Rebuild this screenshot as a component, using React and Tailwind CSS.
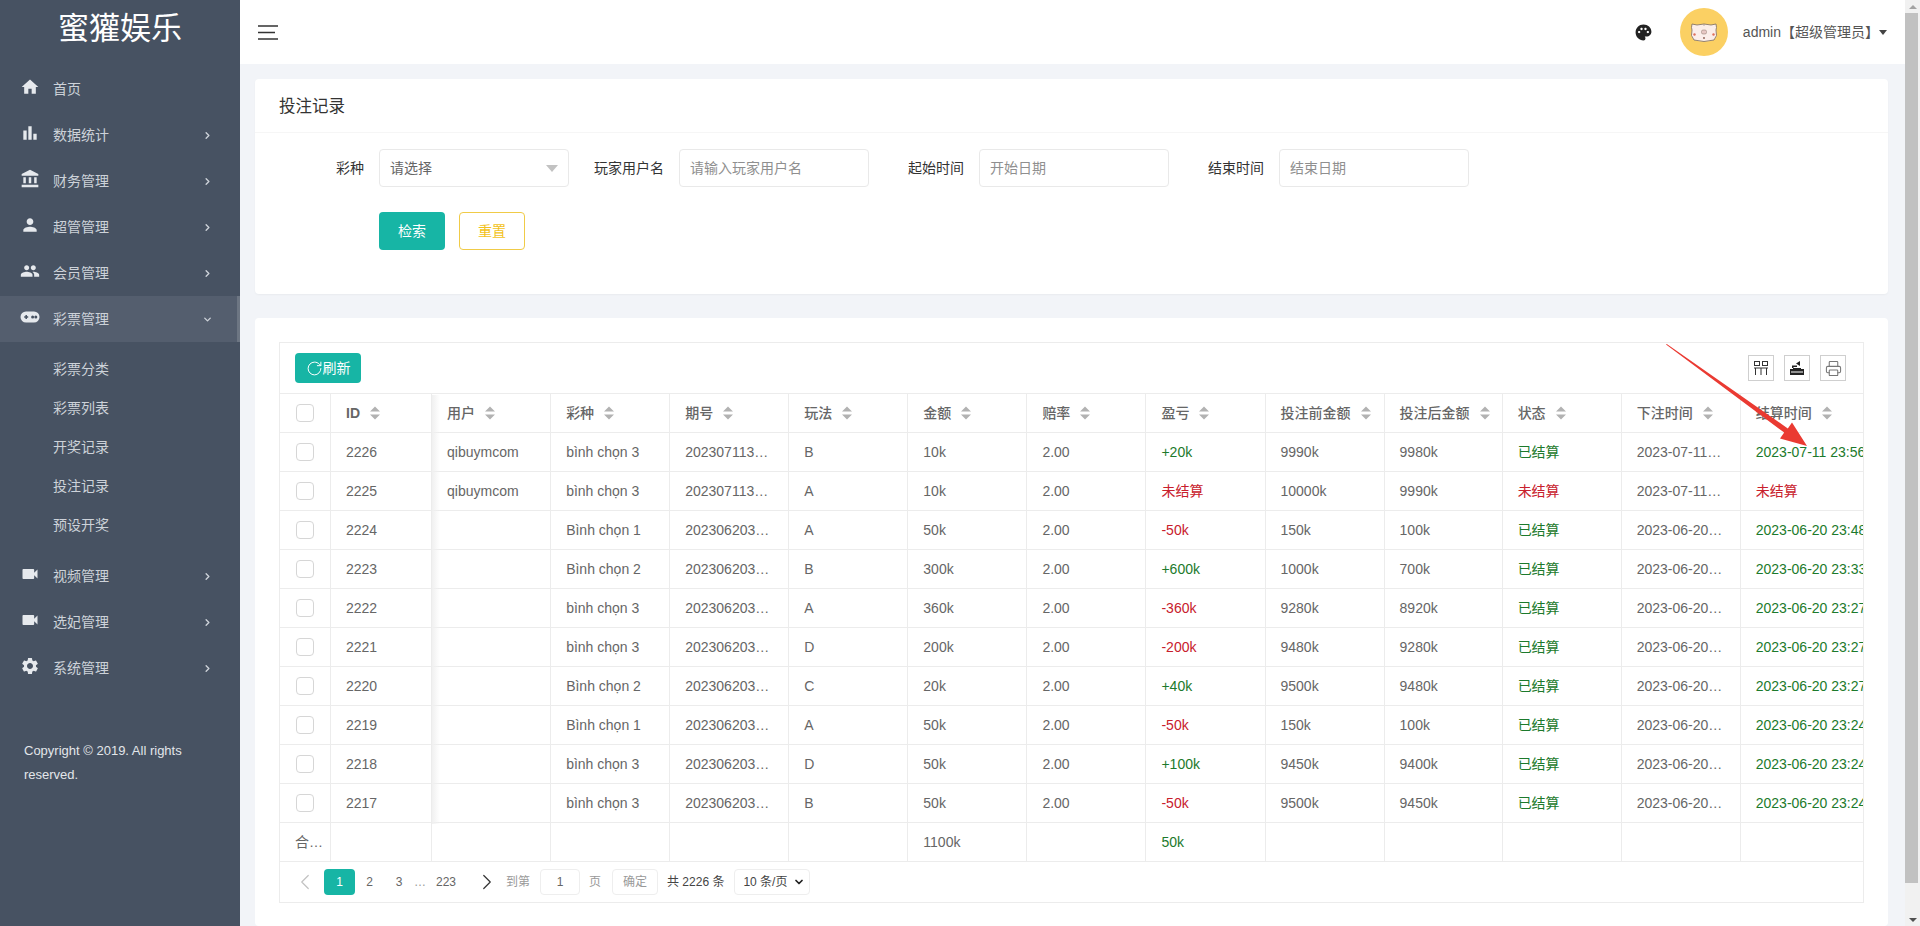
import React from 'react';
import { ChevronRight, ChevronDown, ChevronLeft, Printer, RotateCw } from 'lucide-react';
import {
	MdHome,
	MdBarChart,
	MdAccountBalance,
	MdPerson,
	MdPeople,
	MdVideocam,
	MdSettings,
	MdPalette,
} from 'react-icons/md';

const GamepadIcon = ({ className }) => (
	<svg width="20" height="20" viewBox="0 0 20 20" className={className}>
		<rect x="0.5" y="4.5" width="19" height="11" rx="5.5" fill="currentColor" />
		<path d="M4.2 10h4M6.2 8v4" stroke="#475262" strokeWidth="1.5" />
		<circle cx="12.6" cy="10" r="1.5" fill="#475262" />
		<circle cx="15.8" cy="10" r="1.5" fill="#475262" />
	</svg>
);

const menuTop = [
	{ label: '首页', icon: MdHome, noArrow: true },
	{ label: '数据统计', icon: MdBarChart },
	{ label: '财务管理', icon: MdAccountBalance },
	{ label: '超管管理', icon: MdPerson },
	{ label: '会员管理', icon: MdPeople },
];
const menuBottom = [
	{ label: '视频管理', icon: MdVideocam },
	{ label: '选妃管理', icon: MdVideocam },
	{ label: '系统管理', icon: MdSettings },
];
const subMenu = ['彩票分类', '彩票列表', '开奖记录', '投注记录', '预设开奖'];
const columns = ['用户', '彩种', '期号', '玩法', '金额', '赔率', '盈亏', '投注前金额', '投注后金额', '状态', '下注时间', '结算时间'];

const rows = [
	['2226', 'qibuymcom', 'bình chọn 3', '20230711355012', 'B', '10k', '+20k', '9990k', '9980k', '2023-07-11 23:55:02', '2023-07-11 23:56:03'],
	['2225', 'qibuymcom', 'bình chọn 3', '20230711355013', 'A', '10k', '未结算', '10000k', '9990k', '2023-07-11 23:55:40', ''],
	['2224', '', 'Bình chọn 1', '20230620347001', 'A', '50k', '-50k', '150k', '100k', '2023-06-20 23:47:10', '2023-06-20 23:48:03'],
	['2223', '', 'Bình chọn 2', '20230620332001', 'B', '300k', '+600k', '1000k', '700k', '2023-06-20 23:32:10', '2023-06-20 23:33:03'],
	['2222', '', 'bình chọn 3', '20230620326001', 'A', '360k', '-360k', '9280k', '8920k', '2023-06-20 23:26:30', '2023-06-20 23:27:03'],
	['2221', '', 'bình chọn 3', '20230620326002', 'D', '200k', '-200k', '9480k', '9280k', '2023-06-20 23:26:20', '2023-06-20 23:27:03'],
	['2220', '', 'Bình chọn 2', '20230620326003', 'C', '20k', '+40k', '9500k', '9480k', '2023-06-20 23:26:10', '2023-06-20 23:27:03'],
	['2219', '', 'Bình chọn 1', '20230620323001', 'A', '50k', '-50k', '150k', '100k', '2023-06-20 23:23:30', '2023-06-20 23:24:03'],
	['2218', '', 'bình chọn 3', '20230620323002', 'D', '50k', '+100k', '9450k', '9400k', '2023-06-20 23:23:20', '2023-06-20 23:24:03'],
	['2217', '', 'bình chọn 3', '20230620323003', 'B', '50k', '-50k', '9500k', '9450k', '2023-06-20 23:23:10', '2023-06-20 23:24:03'],
];

const green = 'text-[#1c7a2c]';
const red = 'text-[#c8202c]';

const MenuItem = ({ item, active }) => {
	const Icon = item.icon;
	return (
		<div className={`flex h-[46px] items-center pl-5 ${active ? 'border-r-[3px] border-[#6d7683] bg-[#545e6e] pr-6' : 'pr-[27px]'}`}>
			<Icon className="mb-[5px] w-5 shrink-0 text-[#e6e9ed]" size={20} />
			<span className="ml-[13px] flex-1">{item.label}</span>
			{active ? (
				<ChevronDown size={11} strokeWidth={3} />
			) : (
				!item.noArrow && <ChevronRight size={11} strokeWidth={3} />
			)}
		</div>
	);
};

const Sidebar = () => (
	<aside className="h-full w-[240px] shrink-0 bg-[#475262] text-[14px] text-[#cdd2d9]">
		<div className="mb-2 flex h-[58px] items-center justify-center text-[31px] text-white">蜜獾娱乐</div>
		{menuTop.map((item) => (
			<MenuItem key={item.label} item={item} />
		))}
		<MenuItem item={{ label: '彩票管理', icon: GamepadIcon }} active />
		<div className="pb-2 pl-[53px] pt-2">
			{subMenu.map((label) => (
				<div key={label} className="flex h-[39px] items-center">
					{label}
				</div>
			))}
		</div>
		{menuBottom.map((item) => (
			<MenuItem key={item.label} item={item} />
		))}
		<p className="mt-[48px] w-[192px] pl-6 text-[13px] leading-6 text-[#e3e6ea]">Copyright © 2019. All rights reserved.</p>
	</aside>
);

const Pig = () => (
	<svg width="30" height="24" viewBox="0 0 30 24">
		<path d="M3 4 L8 5 Q15 3 22 5 L27 4 Q28 8 27 10 Q29 16 25 20 Q15 23 5 20 Q1 16 3 10 Q2 8 3 4Z" fill="#fbeeea" stroke="#7a6a5c" strokeWidth="0.8" />
		<rect x="12.5" y="10" width="5" height="4" rx="1.5" fill="#e8c8c4" stroke="#8a7468" strokeWidth="0.5" />
		<circle cx="5.5" cy="14.5" r="1.2" fill="#e0705c" />
		<circle cx="24.5" cy="14.5" r="1.2" fill="#e0705c" />
		<circle cx="15" cy="18" r="0.9" fill="#8a5c50" />
		<circle cx="15" cy="5" r="0.6" fill="#8a7468" />
	</svg>
);

const Header = () => (
	<header className="flex h-16 shrink-0 items-center bg-white pl-[18px] pr-[18px] text-[14px] text-[#555]">
		<svg width="20" height="15" viewBox="0 0 20 15" className="shrink-0">
			<path d="M0 1h20M0 7.5h17M0 14h20" stroke="#333" strokeWidth="1.5" />
		</svg>
		<div className="flex-1" />
		<MdPalette size={19} className="text-[#222]" />
		<div className="ml-[27px] flex h-12 w-12 items-center justify-center rounded-full bg-[#fbd063]">
			<Pig />
		</div>
		<span className="ml-[15px]">admin【超级管理员】</span>
		<span className="h-0 w-0 border-x-4 border-t-[5px] border-x-transparent border-t-[#444]" />
	</header>
);

const fieldClass = 'h-[38px] w-[190px] rounded-sm border border-[#e9e9e9] px-[10px] text-[14px] text-[#666] outline-none placeholder:text-[#8f8f8f]';

const Field = ({ label, children }) => (
	<div className="flex w-[300px] items-center">
		<label className="w-[109px] pr-[15px] text-right text-[14px] text-[#333]">{label}</label>
		{children}
	</div>
);

const SearchCard = () => (
	<section className="rounded-sm bg-white shadow-[0_1px_2px_rgba(0,0,0,0.04)]">
		<h2 className="flex h-[54px] items-center border-b border-[#f6f6f6] pl-6 pt-[2px] text-[16.5px] font-normal text-[#333]">投注记录</h2>
		<div className="pb-[44px] pt-4">
			<div className="flex pl-[15px]">
				<Field label="彩种">
					<div className={`${fieldClass} flex items-center justify-between text-[#8f8f8f]`}>
						<span>请选择</span>
						<span className="h-0 w-0 border-x-[6px] border-t-[7px] border-x-transparent border-t-[#c2c2c2]" />
					</div>
				</Field>
				<Field label="玩家用户名">
					<input className={fieldClass} placeholder="请输入玩家用户名" />
				</Field>
				<Field label="起始时间">
					<input className={fieldClass} placeholder="开始日期" />
				</Field>
				<Field label="结束时间">
					<input className={fieldClass} placeholder="结束日期" />
				</Field>
			</div>
			<div className="mt-[25px] flex gap-[14px] pl-[124px] text-[14px]">
				<button className="h-[38px] w-[66px] rounded-sm bg-[#17b5a5] text-white">检索</button>
				<button className="h-[38px] w-[66px] rounded-sm border border-[#f0cb47] bg-white text-[#f2c21a]">重置</button>
			</div>
		</div>
	</section>
);

const SortIcon = () => (
	<svg width="10" height="14" viewBox="0 0 10 14" className="ml-[10px] shrink-0">
		<path d="M5 0.5 L10 5.5 H0Z M5 13.5 L0 8.5 H10Z" fill="#b2b2b2" />
	</svg>
);

const CheckBox = () => <div className="mx-auto h-[18px] w-[18px] rounded-sm border border-[#d6d6d6] bg-white" />;

const tdClass = 'h-[39px] border-b border-r border-[#ececec] p-0 text-[14px] font-normal';

const Cell = ({ children, className = '' }) => (
	<td className={tdClass}>
		<div className={`truncate px-[15px] ${className}`}>{children}</div>
	</td>
);

const profitColor = (v) => (v.startsWith('+') ? green : red);

const RecordsTable = () => (
	<table className="w-[1661px] table-fixed border-separate border-spacing-0 text-left text-[#666]">
		<colgroup>
			<col className="w-[51px]" />
			<col className="w-[101px]" />
			{columns.slice(0, -1).map((c) => (
				<col key={c} className={c === '投注后金额' ? 'w-[118px]' : 'w-[119px]'} />
			))}
			<col className="w-[200px]" />
		</colgroup>
		<thead>
			<tr>
				<th className={tdClass}>
					<CheckBox />
				</th>
				{['ID', ...columns].map((c) => (
					<th key={c} className={tdClass}>
						<div className={`flex items-center whitespace-nowrap px-[15px] ${c === 'ID' ? 'font-bold' : 'font-medium'}`}>
							{c}
							<SortIcon />
						</div>
					</th>
				))}
			</tr>
		</thead>
		<tbody>
			{rows.map((r) => {
				const pending = r[6] === '未结算';
				return (
					<tr key={r[0]}>
						<td className={tdClass}>
							<CheckBox />
						</td>
						<Cell>{r[0]}</Cell>
						<Cell>{r[1]}</Cell>
						<Cell>{r[2]}</Cell>
						<Cell>{r[3]}</Cell>
						<Cell>{r[4]}</Cell>
						<Cell>{r[5]}</Cell>
						<Cell>2.00</Cell>
						<Cell className={profitColor(r[6])}>{r[6]}</Cell>
						<Cell>{r[7]}</Cell>
						<Cell>{r[8]}</Cell>
						<Cell className={pending ? red : green}>{pending ? '未结算' : '已结算'}</Cell>
						<Cell>{r[9]}</Cell>
						<Cell className={pending ? red : green}>{pending ? '未结算' : r[10]}</Cell>
					</tr>
				);
			})}
			<tr>
				<td className={tdClass}>
					<div className="ml-[15px] w-[28px] truncate">合计行</div>
				</td>
				<Cell />
				<Cell />
				<Cell />
				<Cell />
				<Cell />
				<Cell>1100k</Cell>
				<Cell />
				<Cell className={green}>50k</Cell>
				<Cell />
				<Cell />
				<Cell />
				<Cell />
				<Cell />
			</tr>
		</tbody>
	</table>
);

const ColsIcon = () => (
	<svg width="16" height="16" viewBox="0 0 16 16" fill="none" stroke="#333" strokeWidth="1">
		<rect x="1.5" y="1.5" width="5" height="4" />
		<rect x="9.5" y="1.5" width="5" height="4" />
		<path d="M1 8h14M2.5 8v7M8 8v7M13.5 8v7" />
	</svg>
);

const ExportIcon = () => (
	<svg width="16" height="16" viewBox="0 0 16 16">
		<path d="M1 9h3v-1h8v1h3v6H1z" fill="#222" />
		<path d="M3 8V5.5h5v1.5H4.5V8zM7 3.5 11 1v5z" fill="#222" />
		<path d="M2 12h12" stroke="#fff" strokeWidth="1" />
	</svg>
);

const ToolBtn = ({ children }) => (
	<div className="flex h-[26px] w-[26px] items-center justify-center border border-[#cfcfcf]">{children}</div>
);

const Pagination = () => (
	<div className="flex h-[40px] items-center pl-3 text-[12px] text-[#666]">
		<div className="flex w-[26px] justify-center text-[#c2c2c2]">
			<ChevronLeft size={26} strokeWidth={1.1} />
		</div>
		<div className="ml-[6px] flex h-[26px] w-[31px] items-center justify-center rounded-sm bg-[#17b5a5] text-white">1</div>
		<div className="w-[29px] text-center">2</div>
		<div className="w-[30px] text-center">3</div>
		<div className="w-[10px] text-center text-[#999]">…</div>
		<div className="w-[44px] text-center">223</div>
		<div className="flex w-[38px] justify-center text-[#333]">
			<ChevronRight size={26} strokeWidth={1.1} />
		</div>
		<span className="text-[#999]">到第</span>
		<div className="ml-[10px] flex h-[26px] w-[40px] items-center justify-center rounded-sm border border-[#eee]">1</div>
		<span className="ml-[9px] text-[#999]">页</span>
		<div className="ml-[11px] flex h-[26px] w-[46px] items-center justify-center rounded-sm border border-[#eee] text-[#999]">确定</div>
		<span className="ml-[9px] whitespace-nowrap text-[#444]">共 2226 条</span>
		<div className="ml-[10px] flex h-[26px] w-[76px] items-center justify-between rounded-sm border border-[#eee] pl-2 pr-1 text-[#444]">
			10 条/页
			<ChevronDown size={12} strokeWidth={3.5} className="text-[#222]" />
		</div>
	</div>
);

const TableCard = () => (
	<section className="min-h-0 flex-1 rounded-sm bg-white px-6 pt-6">
		<div className="relative overflow-hidden border border-[#ececec]">
			<div className="flex h-[51px] items-center justify-between border-b border-[#ececec] pl-[15px] pr-[17px]">
				<button className="flex h-[30px] w-[66px] items-center justify-center rounded-sm bg-[#17b5a5] text-[14px] text-white">
					<RotateCw size={17} strokeWidth={1.4} />
					<span>刷新</span>
				</button>
				<div className="flex gap-[10px]">
					<ToolBtn>
						<ColsIcon />
					</ToolBtn>
					<ToolBtn>
						<ExportIcon />
					</ToolBtn>
					<ToolBtn>
						<Printer size={17} strokeWidth={1.5} className="text-[#777]" />
					</ToolBtn>
				</div>
			</div>
			<RecordsTable />
			<Pagination />
			{/* shadow of the fixed left columns */}
			<div className="absolute left-[152px] top-[52px] h-[429px] w-2 bg-gradient-to-r from-[#f0f0f0] to-transparent" />
			{/* red annotation arrow */}
			<svg width="142" height="103" viewBox="0 0 142 103" className="absolute left-[1386px] top-[1px]">
				<polygon points="0,0.6 0.8,0 121.8,84.4 126,78.5 141,102 114,94.5 118.2,88.6" fill="#ea3a32" />
			</svg>
		</div>
	</section>
);

const Scrollbar = () => (
	<div className="flex h-full w-[15px] shrink-0 flex-col bg-[#f1f1f1]">
		<div className="flex h-[13px] items-center justify-center">
			<span className="h-0 w-0 border-x-[4px] border-b-[4px] border-x-transparent border-b-[#a3a3a3]" />
		</div>
		<div className="h-[870px] w-[13px] bg-[#c1c1c1]" />
		<div className="flex-1" />
		<div className="flex h-[13px] items-center justify-center">
			<span className="h-0 w-0 border-x-[4px] border-t-[4px] border-x-transparent border-t-[#505050]" />
		</div>
	</div>
);

const App = () => (
	<div className="flex h-[926px] w-full overflow-hidden bg-[#f2f4f8] font-['Liberation_Sans','Noto_Sans_CJK_SC',sans-serif]">
		<Sidebar />
		<div className="flex min-w-0 flex-1 flex-col">
			<Header />
			<main className="flex min-h-0 flex-1 flex-col gap-6 pl-[15px] pr-[17px] pt-[15px]">
				<SearchCard />
				<TableCard />
			</main>
		</div>
		<Scrollbar />
	</div>
);

export default App;
